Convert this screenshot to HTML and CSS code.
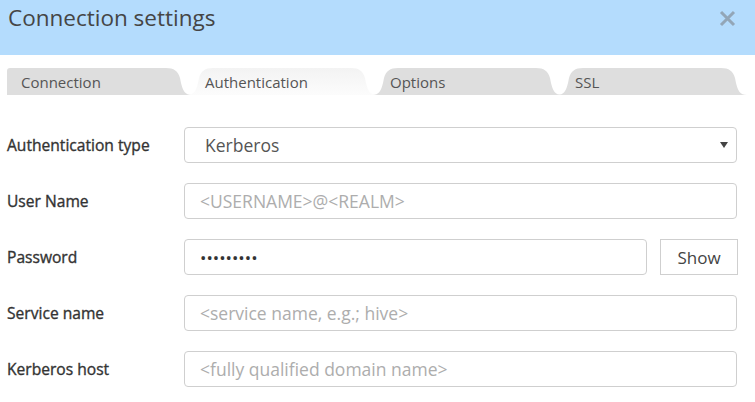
FILE: index.html
```html
<!DOCTYPE html>
<html lang="en">
<head>
<meta charset="utf-8">
<title>Connection settings</title>
<link rel="stylesheet" href="styles.css">
</head>
<body>
<div class="dialog">
  <header class="header">
    <h1 class="title">Connection settings</h1>
    <button class="close" type="button" aria-label="Close">
      <svg width="17" height="17" viewBox="0 0 17 17"><path d="M2 2 L15 15 M15 2 L2 15" stroke="#93a6b7" stroke-width="3" stroke-linecap="butt" fill="none"/></svg>
    </button>
  </header>
  <nav class="tabs">
    <div class="tab tab-first">Connection</div>
    <div class="tab tab-active">Authentication</div>
    <div class="tab">Options</div>
    <div class="tab">SSL</div>
  </nav>
  <form class="form">
    <label class="label">Authentication type</label>
    <div class="select-wrap">
      <select class="select"><option>Kerberos</option></select>
      <svg class="arrow" width="8" height="6" viewBox="0 0 8 6"><path d="M0 0 H8 L4 6 Z" fill="#444"/></svg>
    </div>
    <label class="label">User Name</label>
    <input class="input" type="text" placeholder="<USERNAME>@<REALM>">
    <label class="label">Password</label>
    <div class="pw-row">
      <input class="input pw" type="password" value="xxxxxxxxx">
      <button class="show" type="button">Show</button>
    </div>
    <label class="label">Service name</label>
    <input class="input" type="text" placeholder="<service name, e.g.; hive>">
    <label class="label">Kerberos host</label>
    <input class="input" type="text" placeholder="<fully qualified domain name>">
  </form>
</div>
</body>
</html>
```
FILE: styles.css
```css
* { box-sizing: border-box; }
html, body { margin: 0; padding: 0; background: #fff; }
body { font-family: "Open Sans", "Liberation Sans", sans-serif; width: 755px; height: 402px; overflow: hidden; }

.header {
  height: 55px;
  background: #b4dcfd;
  display: flex;
  align-items: flex-start;
  justify-content: space-between;
  padding: 0 19px 0 8px;
}
.title {
  margin: 0;
  font-size: 22.5px;
  font-weight: 400;
  color: #454545;
  line-height: 36px;
}
.close {
  border: 0;
  background: transparent;
  padding: 0;
  margin-top: 10px;
  width: 17px;
  height: 17px;
  display: flex;
}

.tabs {
  display: flex;
  margin: 13px 7px 0 7px;
  height: 27px;
  overflow: hidden;
}
.tab {
  position: relative;
  flex: 0 0 190px;
  width: 190px;
  height: 27px;
  margin-left: -5px;
  padding-left: 18px;
  font-size: 15px;
  line-height: 28px;
  color: #555;
  background: #dedede;
  clip-path: path('M0 27 C7 27 9 23 11 15 L12 10 C14 3 18 0 26 0 L164 0 C172 0 176 3 178 10 L179 15 C181 23 183 27 190 27 Z');
}
.tab-first {
  flex-basis: 185px;
  width: 185px;
  margin-left: 0;
  padding-left: 14px;
  clip-path: path('M0 27 L0 3 Q0 0 3 0 L159 0 C167 0 171 3 173 10 L174 15 C176 23 178 27 185 27 Z');
}
.tab-active {
  z-index: 2;
  background: linear-gradient(#f3f3f3, #fcfcfc);
}

.form {
  display: grid;
  grid-template-columns: 177px 1fr;
  row-gap: 20px;
  align-items: center;
  padding: 32px 18px 0 7px;
}
.label {
  font-size: 15.6px;
  font-weight: 400;
  color: #333;
  -webkit-text-stroke: 0.35px #333;
}
.input, .select {
  width: 100%;
  height: 36px;
  border: 1px solid #cfcfcf;
  border-radius: 4px;
  background: #fff;
  font-family: "Open Sans", "Liberation Sans", sans-serif;
  font-size: 17.5px;
  color: #555;
  padding: 0 15px;
  outline: none;
  margin: 0;
}
.input::placeholder { color: #adadad; opacity: 1; }
.select-wrap { position: relative; }
.select {
  appearance: none;
  -webkit-appearance: none;
  padding-left: 20px;
}
.arrow {
  position: absolute;
  right: 9px;
  top: 15px;
}
.pw-row {
  display: flex;
  gap: 13px;
}
.pw {
  flex: 1;
  font-size: 17px;
  color: #333;
}
.show {
  flex: 0 0 78px;
  height: 36px;
  border: 1px solid #cfcfcf;
  border-radius: 0;
  background: #fff;
  font-family: "Open Sans", "Liberation Sans", sans-serif;
  font-size: 17px;
  color: #444;
  padding: 0;
  margin-right: -1px;
}
```
